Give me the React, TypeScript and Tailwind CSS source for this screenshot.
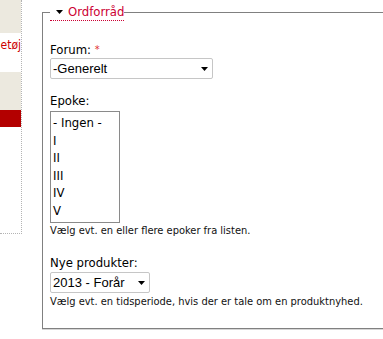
import React from 'react';

const tahoma = "[font-family:'DejaVu_Sans_Condensed','DejaVu_Sans',sans-serif] [font-stretch:condensed]";
const arial = "[font-family:'Liberation_Sans',Arial,sans-serif]";

function Arrow() {
  return (
    <svg width="7" height="4" viewBox="0 0 7 4" className="shrink-0">
      <path d="M0 0h7L3.5 4z" fill="#000" />
    </svg>
  );
}

function Dropdown({ value, width }: { value: string; width: string }) {
  return (
    <div className={`${width} h-[21px] border border-[#c6c6c6] rounded-[2px] bg-white flex items-center justify-between pl-[2px] pr-[4px] text-[13px] text-black ${arial}`}>
      <span>{value}</span>
      <Arrow />
    </div>
  );
}

export default function App() {
  const epoker = ['- Ingen -', 'I', 'II', 'III', 'IV', 'V'];

  return (
    <div className={`w-[383px] h-[339px] overflow-hidden bg-white flex items-start ${tahoma}`}>
      {/* Sidebar (cut off by the viewport) */}
      <div className="w-[22px] h-[234px] shrink-0 flex flex-col border-r border-b border-dotted border-[#b4b4b4]">
        <div className="h-[33px] bg-[#ece9df]" />
        <div className="h-[39px] pt-[5px] flex justify-end">
          <span className="text-[12px] leading-[14px] text-[#cc0000] whitespace-nowrap">etøj</span>
        </div>
        <div className="h-[38px] bg-[#ece9df]" />
        <div className="h-[17px] bg-[#b30000]" />
        <div className="flex-1" />
      </div>

      {/* Fieldset */}
      <fieldset className="ml-[20px] mt-[3px] w-[420px] shrink-0 border border-[#808080] px-[7px] pt-0 pb-[20px] shadow-[0_1px_0_#d6d6d6]">
        <legend className="p-0">
          <span className="flex items-center h-[18px] border-b border-dotted border-[#cc0033] pl-[6px] text-[13px] leading-[17px] text-[#cc0033]">
            <Arrow />
            <span className="ml-[5px]">Ordforråd</span>
          </span>
        </legend>

        <div className="mt-[21px] text-[13px] leading-[16px] text-black">
          Forum: <span className="text-[11px] text-[#e03030] align-top">*</span>
        </div>
        <Dropdown value="-Generelt" width="w-[163px]" />

        <div className="mt-[14px] text-[13px] leading-[16px] text-black">Epoke:</div>
        <div className="mt-[2px] w-[70px] h-[112px] border border-[#8a8a8a] pl-[2px] pt-[2px] text-[13px] leading-[17.6px] text-black">
          {epoker.map((e) => (
            <div key={e}>{e}</div>
          ))}
        </div>
        <div className="mt-[1px] text-[11px] leading-[13px] text-[#111]">
          Vælg evt. en eller flere epoker fra listen.
        </div>

        <div className="mt-[18px] text-[13px] leading-[16px] text-black">Nye produkter:</div>
        <div className="mt-[1px]">
          <Dropdown value="2013 - Forår" width="w-[100px]" />
        </div>
        <div className="mt-[2px] text-[11px] leading-[13px] text-[#111]">
          Vælg evt. en tidsperiode, hvis der er tale om en produktnyhed.
        </div>
      </fieldset>
    </div>
  );
}
